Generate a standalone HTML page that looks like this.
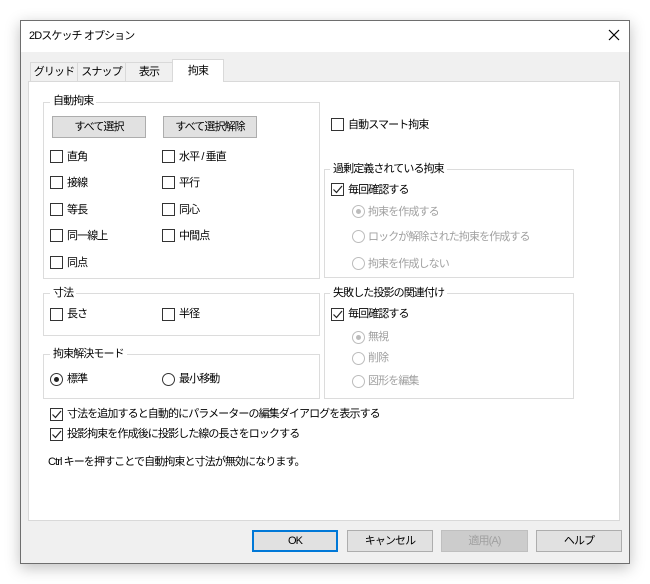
<!DOCTYPE html>
<html><head><meta charset="utf-8">
<style>
*{box-sizing:border-box;margin:0;padding:0}
body{width:650px;height:584px;background:#fff;position:relative;overflow:hidden;font-family:"Liberation Sans","Noto Sans CJK JP",sans-serif;font-size:11px;letter-spacing:-0.9px;color:#000}
.a{position:absolute;white-space:nowrap;line-height:14px}
#win{position:absolute;left:20px;top:20px;width:610px;height:544px;background:#f0f0f0;border:1px solid #6e6e6e;box-shadow:0 4px 14px rgba(0,0,0,.25)}
#title{position:absolute;left:20px;top:20px;width:610px;height:32px;background:#fff;border:1px solid #6e6e6e;border-bottom:none}
#panel{position:absolute;left:28px;top:81px;width:592px;height:440px;background:#fff;border:1px solid #d9d9d9}
.tab{position:absolute;top:62px;height:20px;border:1px solid #d9d9d9;border-bottom:none;background:#f0f0f0;text-align:center;line-height:18px;white-space:nowrap}
.grp{position:absolute;border:1px solid #dcdcdc}
.gl{position:absolute;background:#fff;padding:0 3px;line-height:14px;white-space:nowrap}
.cb{position:absolute;width:13px;height:13px;border:1px solid #333;background:#fff}
.rb{position:absolute;width:13px;height:13px;border:1px solid #333;border-radius:50%;background:#fff}
.rb.d{border-color:#bcbcbc}
.btn{position:absolute;height:22px;border:1px solid #adadad;background:#e1e1e1;text-align:center;line-height:20px;white-space:nowrap}
.g{color:#a0a0a0}
</style></head><body>
<div id="win"></div>
<div id="title"></div>
<div class="a" style="left:29px;top:29px">2Dスケッチ オプション</div>
<svg class="a" style="left:608px;top:29px" width="12" height="12"><path d="M1 1L11 11M11 1L1 11" stroke="#000" stroke-width="1.2"/></svg>

<div class="tab" style="left:30px;width:48px">グリッド</div>
<div class="tab" style="left:77px;width:49px">スナップ</div>
<div class="tab" style="left:125px;width:48px">表示</div>
<div id="panel"></div>
<div class="tab" style="left:172px;top:59px;width:52px;height:23px;background:#fff;line-height:22px">拘束</div>

<div class="grp" style="left:43px;top:102px;width:277px;height:177px"></div>
<div class="gl" style="left:50px;top:94px">自動拘束</div>
<div class="btn" style="left:52px;top:116px;width:94px">すべて選択</div>
<div class="btn" style="left:163px;top:116px;width:94px">すべて選択解除</div>

<div class="cb" style="left:50px;top:150px"></div><div class="a" style="left:67px;top:150px">直角</div>
<div class="cb" style="left:50px;top:176px"></div><div class="a" style="left:67px;top:176px">接線</div>
<div class="cb" style="left:50px;top:203px"></div><div class="a" style="left:67px;top:203px">等長</div>
<div class="cb" style="left:50px;top:229px"></div><div class="a" style="left:67px;top:229px">同一線上</div>
<div class="cb" style="left:50px;top:256px"></div><div class="a" style="left:67px;top:256px">同点</div>
<div class="cb" style="left:162px;top:150px"></div><div class="a" style="left:179px;top:150px">水平 / 垂直</div>
<div class="cb" style="left:162px;top:176px"></div><div class="a" style="left:179px;top:176px">平行</div>
<div class="cb" style="left:162px;top:203px"></div><div class="a" style="left:179px;top:203px">同心</div>
<div class="cb" style="left:162px;top:229px"></div><div class="a" style="left:179px;top:229px">中間点</div>

<div class="cb" style="left:331px;top:118px"></div><div class="a" style="left:348px;top:118px">自動スマート拘束</div>

<div class="grp" style="left:324px;top:169px;width:250px;height:109px"></div>
<div class="gl" style="left:330px;top:162px">過剰定義されている拘束</div>
<div class="cb" style="left:331px;top:183px"></div>
<svg class="a" style="left:332px;top:184px" width="11" height="11"><path d="M1.5 5.5L4.5 8.5L10 2" stroke="#222" stroke-width="1.2" fill="none"/></svg>
<div class="a" style="left:348px;top:183px">毎回確認する</div>
<div class="rb d" style="left:352px;top:205px"><div style="position:absolute;left:3px;top:3px;width:5px;height:5px;border-radius:50%;background:#bcbcbc"></div></div><div class="a g" style="left:368px;top:205px">拘束を作成する</div>
<div class="rb d" style="left:352px;top:230px"></div><div class="a g" style="left:368px;top:230px">ロックが解除された拘束を作成する</div>
<div class="rb d" style="left:352px;top:257px"></div><div class="a g" style="left:368px;top:257px">拘束を作成しない</div>

<div class="grp" style="left:43px;top:293px;width:277px;height:43px"></div>
<div class="gl" style="left:50px;top:286px">寸法</div>
<div class="cb" style="left:50px;top:308px"></div><div class="a" style="left:67px;top:307px">長さ</div>
<div class="cb" style="left:162px;top:308px"></div><div class="a" style="left:179px;top:307px">半径</div>

<div class="grp" style="left:43px;top:354px;width:277px;height:45px"></div>
<div class="gl" style="left:50px;top:347px">拘束解決モード</div>
<div class="rb" style="left:50px;top:373px"><div style="position:absolute;left:3px;top:3px;width:5px;height:5px;border-radius:50%;background:#222"></div></div><div class="a" style="left:67px;top:372px">標準</div>
<div class="rb" style="left:162px;top:373px"></div><div class="a" style="left:179px;top:372px">最小移動</div>

<div class="grp" style="left:324px;top:293px;width:250px;height:106px"></div>
<div class="gl" style="left:330px;top:286px">失敗した投影の関連付け</div>
<div class="cb" style="left:331px;top:308px"></div>
<svg class="a" style="left:332px;top:309px" width="11" height="11"><path d="M1.5 5.5L4.5 8.5L10 2" stroke="#222" stroke-width="1.2" fill="none"/></svg>
<div class="a" style="left:348px;top:307px">毎回確認する</div>
<div class="rb d" style="left:352px;top:331px"><div style="position:absolute;left:3px;top:3px;width:5px;height:5px;border-radius:50%;background:#bcbcbc"></div></div><div class="a g" style="left:368px;top:330px">無視</div>
<div class="rb d" style="left:352px;top:352px"></div><div class="a g" style="left:368px;top:351px">削除</div>
<div class="rb d" style="left:352px;top:375px"></div><div class="a g" style="left:368px;top:374px">図形を編集</div>

<div class="cb" style="left:50px;top:408px"></div>
<svg class="a" style="left:51px;top:409px" width="11" height="11"><path d="M1.5 5.5L4.5 8.5L10 2" stroke="#222" stroke-width="1.2" fill="none"/></svg>
<div class="a" style="left:67px;top:407px">寸法を追加すると自動的にパラメーターの編集ダイアログを表示する</div>
<div class="cb" style="left:50px;top:428px"></div>
<svg class="a" style="left:51px;top:429px" width="11" height="11"><path d="M1.5 5.5L4.5 8.5L10 2" stroke="#222" stroke-width="1.2" fill="none"/></svg>
<div class="a" style="left:67px;top:427px">投影拘束を作成後に投影した線の長さをロックする</div>
<div class="a" style="left:48px;top:455px">Ctrl キーを押すことで自動拘束と寸法が無効になります。</div>

<div class="btn" style="left:252px;top:530px;width:86px;border:2px solid #0078d7;line-height:18px">OK</div>
<div class="btn" style="left:347px;top:530px;width:86px">キャンセル</div>
<div class="btn g" style="left:441px;top:530px;width:87px;background:#cccccc;border-color:#bfbfbf">適用(A)</div>
<div class="btn" style="left:536px;top:530px;width:86px">ヘルプ</div>
</body></html>
